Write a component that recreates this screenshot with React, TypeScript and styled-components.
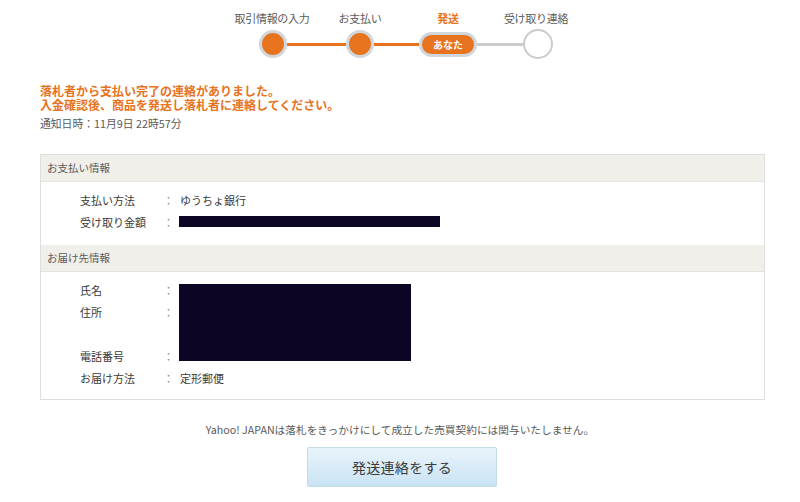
import React from 'react';
import styled, { createGlobalStyle } from 'styled-components';

const Colors = {
  orange: '#e8731e',
  text: '#3a3a3a',
  subText: '#5a5a5a',
  ring: '#cfd6dc',
  border: '#dedede',
  band: '#f1efe9',
  redact: '#0c0523',
};

const GlobalStyle = createGlobalStyle`
  body {
    margin: 0;
    background: #ffffff;
    font-family: "Noto Sans CJK JP", "Noto Sans", sans-serif;
    color: ${Colors.text};
  }
`;

const Page = styled.div`
  width: 800px;
  height: 502px;
  overflow: hidden;
  padding-top: 10px;
  box-sizing: border-box;
`;

/* ---------- stepper ---------- */

const Stepper = styled.div`
  margin-left: 228px;
  width: 352px;
`;

const LabelRow = styled.div`
  display: grid;
  grid-template-columns: repeat(4, 88px);
  height: 16px;
`;

const StepLabel = styled.div<{ $active?: boolean }>`
  text-align: center;
  font-size: 11px;
  line-height: 16px;
  letter-spacing: -0.3px;
  color: ${(p) => (p.$active ? Colors.orange : Colors.subText)};
  font-weight: ${(p) => (p.$active ? 700 : 400)};
`;

const Track = styled.div`
  display: flex;
  align-items: center;
  height: 32px;
  margin-top: 2px;
  margin-left: 31px;
`;

const Dot = styled.div<{ $done?: boolean }>`
  flex: none;
  width: ${(p) => (p.$done ? 28 : 30)}px;
  height: ${(p) => (p.$done ? 28 : 30)}px;
  border-radius: 50%;
  box-sizing: border-box;
  background: ${(p) => (p.$done ? Colors.orange : '#ffffff')};
  border: ${(p) => (p.$done ? `3px solid ${Colors.ring}` : '2px solid #cbcbcb')};
`;

const Pill = styled.div`
  flex: none;
  width: 58px;
  height: 25px;
  border-radius: 13px;
  box-sizing: border-box;
  border: 3px solid ${Colors.ring};
  background: ${Colors.orange};
  color: #ffffff;
  font-size: 10px;
  font-weight: 700;
  line-height: 19px;
  text-align: center;
`;

const Connector = styled.div<{ $width: number; $done?: boolean }>`
  flex: none;
  width: ${(p) => p.$width}px;
  height: 3px;
  background: ${(p) => (p.$done ? Colors.orange : '#cccccc')};
`;

/* ---------- notice ---------- */

const Notice = styled.div`
  padding: 24px 0 0 40px;
`;

const NoticeLine = styled.div`
  font-size: 12px;
  line-height: 14px;
  font-weight: 700;
  color: ${Colors.orange};
`;

const NoticeDate = styled.div`
  margin-top: 4px;
  font-size: 10.8px;
  line-height: 14px;
  color: ${Colors.subText};
`;

/* ---------- info box ---------- */

const InfoBox = styled.div`
  margin: 24px 35px 0 40px;
  border: 1px solid ${Colors.border};
`;

const SectionHeader = styled.div`
  height: 26px;
  padding-left: 6px;
  background: ${Colors.band};
  border-bottom: 1px solid #e6e4de;
  font-size: 10.5px;
  line-height: 26px;
  color: ${Colors.subText};
`;

const Rows = styled.div<{ $bottom: number }>`
  display: grid;
  grid-template-columns: 83px 17px 1fr;
  grid-auto-rows: 22px;
  padding: 7px 0 ${(p) => p.$bottom}px 39px;
  font-size: 11px;
  color: ${Colors.text};
`;

const Cell = styled.div<{ $row?: number }>`
  line-height: 22px;
  white-space: nowrap;
  ${(p) => (p.$row ? `grid-row: ${p.$row};` : '')}
`;

const Colon = styled(Cell)`
  color: #8a8a8a;
`;

const RedactBar = styled.div<{ $w: number; $rows?: number; $row?: number }>`
  width: ${(p) => p.$w}px;
  background: ${Colors.redact};
  align-self: stretch;
  margin: 5px 0 6px -1px;
  grid-column: 3;
  ${(p) => (p.$row ? `grid-row: ${p.$row} / span ${p.$rows ?? 1};` : '')}
`;

/* ---------- footer ---------- */

const Disclaimer = styled.div`
  margin-top: 23px;
  text-align: center;
  font-size: 10.7px;
  line-height: 14px;
  color: ${Colors.subText};
`;

const SubmitButton = styled.button`
  display: block;
  margin: 10px 0 0 307px;
  width: 190px;
  height: 40px;
  border: 1px solid #c4dcea;
  border-radius: 2px;
  background: linear-gradient(#e9f4fb, #c9e3f3);
  font-family: "Noto Sans CJK JP", "Noto Sans", sans-serif;
  font-size: 14px;
  color: #3a3a3a;
  letter-spacing: 0.3px;
  cursor: pointer;
`;

const steps = ['取引情報の入力', 'お支払い', '発送', '受け取り連絡'];

export default function App() {
  return (
    <Page>
      <GlobalStyle />
      <Stepper>
        <LabelRow>
          {steps.map((s, i) => (
            <StepLabel key={s} $active={i === 2}>
              {s}
            </StepLabel>
          ))}
        </LabelRow>
        <Track>
          <Dot $done />
          <Connector $width={59} $done />
          <Dot $done />
          <Connector $width={45} $done />
          <Pill>あなた</Pill>
          <Connector $width={46} />
          <Dot />
        </Track>
      </Stepper>

      <Notice>
        <NoticeLine>落札者から支払い完了の連絡がありました。</NoticeLine>
        <NoticeLine>入金確認後、商品を発送し落札者に連絡してください。</NoticeLine>
        <NoticeDate>通知日時：11月9日 22時57分</NoticeDate>
      </Notice>

      <InfoBox>
        <SectionHeader>お支払い情報</SectionHeader>
        <Rows $bottom={12}>
          <Cell>支払い方法</Cell>
          <Colon>：</Colon>
          <Cell>ゆうちょ銀行</Cell>
          <Cell>受け取り金額</Cell>
          <Colon>：</Colon>
          <RedactBar $w={261} $row={2} />
        </Rows>

        <SectionHeader>お届け先情報</SectionHeader>
        <Rows $bottom={10}>
          <Cell $row={1}>氏名</Cell>
          <Colon $row={1}>：</Colon>
          <Cell $row={2}>住所</Cell>
          <Colon $row={2}>：</Colon>
          <Cell $row={4}>電話番号</Cell>
          <Colon $row={4}>：</Colon>
          <RedactBar $w={232} $row={1} $rows={4} />
          <Cell $row={5}>お届け方法</Cell>
          <Colon $row={5}>：</Colon>
          <Cell $row={5}>定形郵便</Cell>
        </Rows>
      </InfoBox>

      <Disclaimer>
        Yahoo! JAPANは落札をきっかけにして成立した売買契約には関与いたしません。
      </Disclaimer>
      <SubmitButton>発送連絡をする</SubmitButton>
    </Page>
  );
}
